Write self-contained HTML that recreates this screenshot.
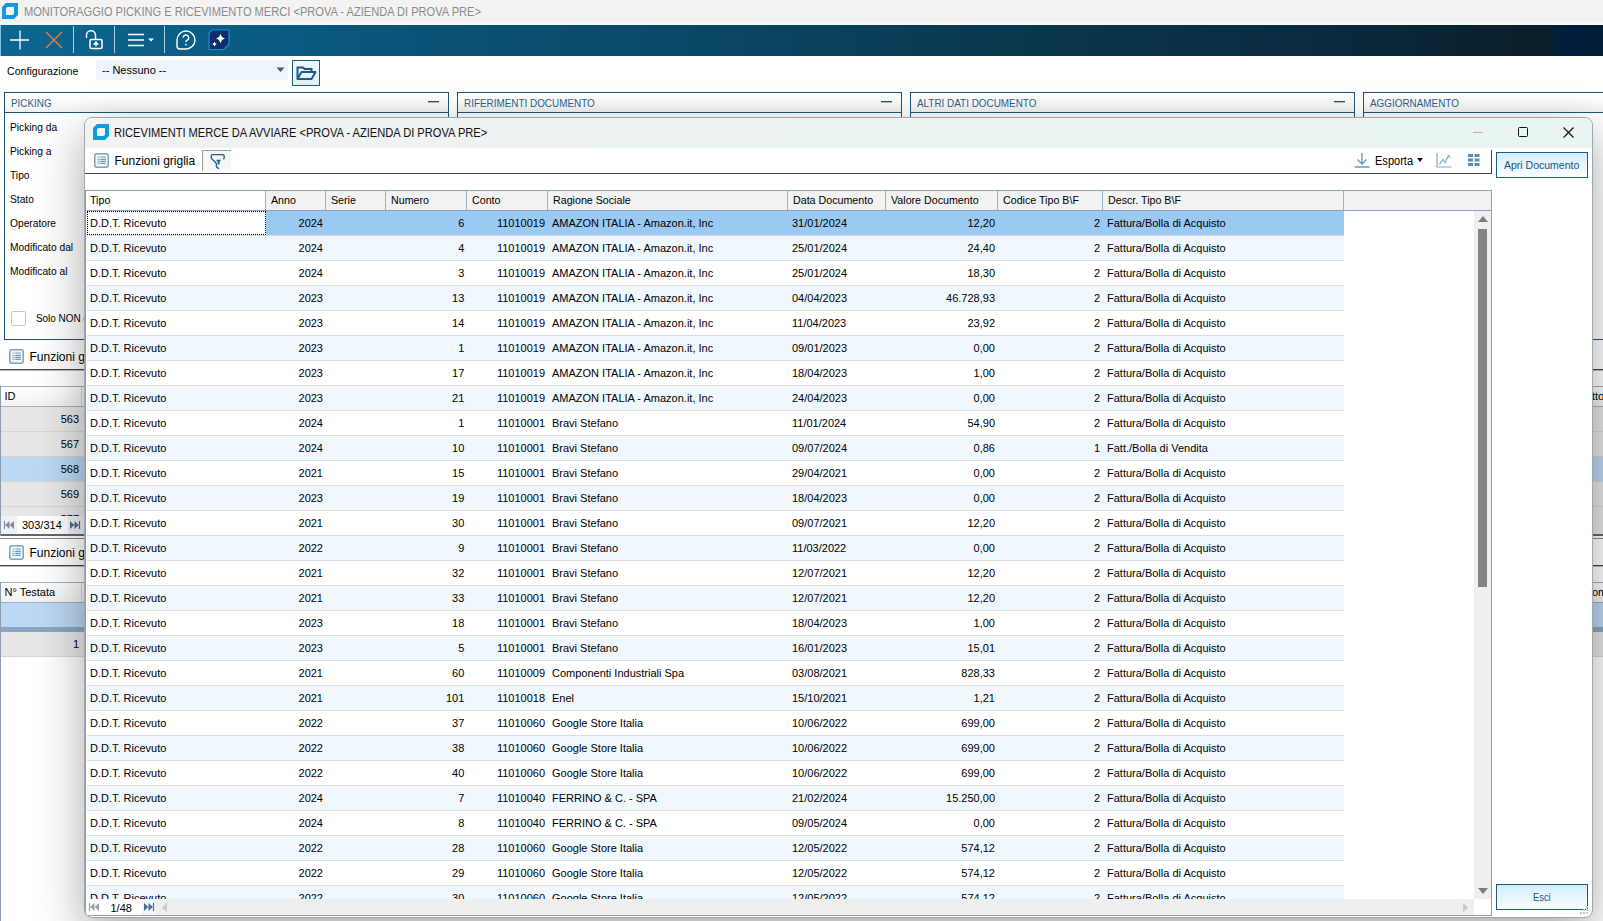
<!DOCTYPE html>
<html><head><meta charset="utf-8">
<style>
*{box-sizing:border-box;margin:0;padding:0}
html,body{width:1603px;height:921px;overflow:hidden;background:#fff;font-family:"Liberation Sans",sans-serif;font-size:11px;color:#000}
.a{position:absolute}
.t{position:absolute;white-space:nowrap;line-height:1}
svg{position:absolute;overflow:visible}
</style></head><body>

<div class="a" style="left:0px;top:0px;width:1603px;height:23px;background:#f3f3f3"></div>
<div class="a" style="left:0px;top:23px;width:1603px;height:2px;background:#f4fbfd"></div>
<svg style="left:2px;top:3px" width="16" height="16" viewBox="0 0 16 16"><path d="M4 0H16V12L12 16H0V4Z" fill="#0d9ce0"/><path d="M5.3 4H12V10.7L10.7 12H4V5.3Z" fill="#f3f3f3"/></svg>
<div class="t " style="left:23.5px;top:5.84px;font-size:12px;color:#8a8a8a;transform:scaleX(0.924);transform-origin:left;">MONITORAGGIO PICKING E RICEVIMENTO MERCI &lt;PROVA - AZIENDA DI PROVA PRE&gt;</div>
<div class="a" style="left:0px;top:25px;width:1603px;height:31px;background:linear-gradient(90deg,#0b6791 0%,#0a5f88 10%,#0a5479 25%,#0a4a6a 40%,#0a3e58 55%,#0a3448 68%,#0a2c42 80%,#0a2434 90%,#0b1e29 96.7%,#021e3c 97.1%,#021c38 100%)"></div>
<div class="a" style="left:0px;top:25px;width:1px;height:31px;background:#7cc4e6"></div>
<div class="a" style="left:73px;top:26px;width:1px;height:27px;background:#d6e8f1;opacity:.8"></div>
<div class="a" style="left:114px;top:26px;width:1px;height:27px;background:#d6e8f1;opacity:.8"></div>
<div class="a" style="left:164px;top:26px;width:1px;height:27px;background:#d6e8f1;opacity:.8"></div>
<svg style="left:10px;top:30px" width="20" height="20" viewBox="0 0 20 20"><path d="M10 0.5V19.5M0 10H19" stroke="#fff" stroke-width="1.3"/></svg>
<svg style="left:45px;top:31px" width="18" height="18" viewBox="0 0 18 18"><path d="M1 1L17 17M17 1L1 17" stroke="#e07a45" stroke-width="1.5"/></svg>
<svg style="left:84px;top:29px" width="22" height="22" viewBox="0 0 22 22"><path d="M2.5 9V6.5A4.5 4.5 0 0 1 11.5 6V10" fill="none" stroke="#fff" stroke-width="1.5"/><rect x="6" y="10.5" width="12" height="9" rx="1.2" fill="none" stroke="#fff" stroke-width="1.5"/><path d="M12 17.5V13.5M10.3 15L12 13L13.7 15Z" stroke="#fff" stroke-width="1.3" fill="#fff"/></svg>
<svg style="left:127px;top:31px" width="30" height="18" viewBox="0 0 30 18"><path d="M1 3.5H17M1 9H17M1 14.5H17" stroke="#fff" stroke-width="1.5"/><path d="M21 7.5H27L24 10.5Z" fill="#fff"/></svg>
<svg style="left:175px;top:29px" width="22" height="22" viewBox="0 0 22 22"><path d="M11 2A9 9 0 1 1 11 20H5A3 3 0 0 1 2 17V11A9 9 0 0 1 11 2Z" fill="none" stroke="#fff" stroke-width="1.4"/><path d="M8.3 8.8A2.7 2.7 0 1 1 11.8 11.3Q11 11.8 11 13" fill="none" stroke="#fff" stroke-width="1.4"/><circle cx="11" cy="15.6" r="0.9" fill="#fff"/></svg>
<svg style="left:208px;top:29px" width="22" height="21" viewBox="0 0 22 21"><path d="M4 1H21V15L15.5 20.5H1V4Z" fill="#0e2d6e" stroke="#1b8fd0" stroke-width="1.2"/><path d="M12.5 4.5Q13.2 8.5 17 9.5Q13.2 10.5 12.5 14.5Q11.8 10.5 8 9.5Q11.8 8.5 12.5 4.5Z" fill="#fff"/><path d="M6.5 12.5Q6.9 14.5 8.8 15Q6.9 15.5 6.5 17.5Q6.1 15.5 4.2 15Q6.1 14.5 6.5 12.5Z" fill="#fff"/></svg>
<div class="t " style="left:6.6px;top:65.69px;font-size:11px;color:#000;transform:scaleX(0.965);transform-origin:left;">Configurazione</div>
<div class="a" style="left:96px;top:60px;width:192px;height:20px;background:#eef6fc"></div>
<div class="t " style="left:102.0px;top:65.19px;font-size:11px;color:#000;">-- Nessuno --</div>
<svg style="left:276px;top:67px" width="10" height="6" viewBox="0 0 10 6"><path d="M0.5 0.5H8.5L4.5 5Z" fill="#505a66"/></svg>
<div class="a" style="left:292px;top:60px;width:28px;height:26px;border:1px solid #1f5d7e;background:linear-gradient(#f0f7fc,#e3eff8)"></div>
<svg style="left:296px;top:65px" width="21" height="16" viewBox="0 0 21 16"><path d="M1.5 13.5V2.5H7L8.5 4H15.5V6.5" fill="none" stroke="#1e5a80" stroke-width="2"/><path d="M1.5 14H15.5L19.5 7H5.5Z" fill="none" stroke="#1e5a80" stroke-width="2" stroke-linejoin="round"/></svg>
<div class="a" style="left:4px;top:92px;width:445px;height:248px;border:1px solid #1f5573;border-right-width:1px;background:#fff"></div>
<div class="a" style="left:5px;top:93px;width:443px;height:19px;background:linear-gradient(#fff 30%,#f1f1f1)"></div>
<div class="a" style="left:4px;top:112px;width:445px;height:1px;background:#1f5573"></div>
<div class="t " style="left:10.5px;top:97.69px;font-size:11px;color:#2c628a;transform:scaleX(0.9);transform-origin:left;">PICKING</div>
<div class="a" style="left:428px;top:101px;width:11px;height:1px;background:#1f5573"></div>
<div class="a" style="left:428px;top:102px;width:11px;height:1px;background:#a9c0ce"></div>
<div class="a" style="left:457px;top:92px;width:445px;height:248px;border:1px solid #1f5573;border-right-width:1px;background:#fff"></div>
<div class="a" style="left:458px;top:93px;width:443px;height:19px;background:linear-gradient(#fff 30%,#f1f1f1)"></div>
<div class="a" style="left:457px;top:112px;width:445px;height:1px;background:#1f5573"></div>
<div class="t " style="left:463.5px;top:97.69px;font-size:11px;color:#2c628a;transform:scaleX(0.9);transform-origin:left;">RIFERIMENTI DOCUMENTO</div>
<div class="a" style="left:881px;top:101px;width:11px;height:1px;background:#1f5573"></div>
<div class="a" style="left:881px;top:102px;width:11px;height:1px;background:#a9c0ce"></div>
<div class="a" style="left:910px;top:92px;width:445px;height:248px;border:1px solid #1f5573;border-right-width:1px;background:#fff"></div>
<div class="a" style="left:911px;top:93px;width:443px;height:19px;background:linear-gradient(#fff 30%,#f1f1f1)"></div>
<div class="a" style="left:910px;top:112px;width:445px;height:1px;background:#1f5573"></div>
<div class="t " style="left:916.5px;top:97.69px;font-size:11px;color:#2c628a;transform:scaleX(0.9);transform-origin:left;">ALTRI DATI DOCUMENTO</div>
<div class="a" style="left:1334px;top:101px;width:11px;height:1px;background:#1f5573"></div>
<div class="a" style="left:1334px;top:102px;width:11px;height:1px;background:#a9c0ce"></div>
<div class="a" style="left:1363px;top:92px;width:260px;height:248px;border:1px solid #1f5573;border-right-width:0px;background:#fff"></div>
<div class="a" style="left:1364px;top:93px;width:258px;height:19px;background:linear-gradient(#fff 30%,#f1f1f1)"></div>
<div class="a" style="left:1363px;top:112px;width:260px;height:1px;background:#1f5573"></div>
<div class="t " style="left:1369.5px;top:97.69px;font-size:11px;color:#2c628a;transform:scaleX(0.9);transform-origin:left;">AGGIORNAMENTO</div>
<div class="t " style="left:10.4px;top:121.69px;font-size:11px;color:#000;transform:scaleX(0.93);transform-origin:left;">Picking da</div>
<div class="t " style="left:10.4px;top:145.69px;font-size:11px;color:#000;transform:scaleX(0.93);transform-origin:left;">Picking a</div>
<div class="t " style="left:10.4px;top:169.69px;font-size:11px;color:#000;transform:scaleX(0.93);transform-origin:left;">Tipo</div>
<div class="t " style="left:10.4px;top:193.69px;font-size:11px;color:#000;transform:scaleX(0.93);transform-origin:left;">Stato</div>
<div class="t " style="left:10.4px;top:217.69px;font-size:11px;color:#000;transform:scaleX(0.93);transform-origin:left;">Operatore</div>
<div class="t " style="left:10.4px;top:241.69px;font-size:11px;color:#000;transform:scaleX(0.93);transform-origin:left;">Modificato dal</div>
<div class="t " style="left:10.4px;top:265.69px;font-size:11px;color:#000;transform:scaleX(0.93);transform-origin:left;">Modificato al</div>
<div class="a" style="left:11px;top:311px;width:15px;height:15px;border:1px solid #c6c6c6;border-radius:2px;background:#fff"></div>
<div class="t " style="left:35.6px;top:312.69px;font-size:11px;color:#000;transform:scaleX(0.9);transform-origin:left;">Solo NON c</div>
<svg style="left:9px;top:349px" width="15" height="15" viewBox="0 0 15 15"><rect x="0.75" y="0.75" width="13.5" height="13.5" rx="2.2" fill="#eef9ff" stroke="#7ea2b8" stroke-width="1.5"/><path d="M3.2 4H5.8M3.2 6.4H5.8M3.2 8.4H5.8M3.2 10.4H5.8" stroke="#a9b9c3" stroke-width="1.2"/><path d="M6.3 4H11.8M6.3 6.4H11.8M6.3 8.4H11.8M6.3 10.4H11.8" stroke="#6f9ab4" stroke-width="1.2"/></svg>
<div class="t " style="left:29.5px;top:350.84px;font-size:12px;color:#000;">Funzioni griglia</div>
<div class="a" style="left:0px;top:369px;width:1603px;height:1px;background:#444"></div>
<div class="a" style="left:0px;top:370px;width:1603px;height:1px;background:#bbb"></div>
<svg style="left:9px;top:545px" width="15" height="15" viewBox="0 0 15 15"><rect x="0.75" y="0.75" width="13.5" height="13.5" rx="2.2" fill="#eef9ff" stroke="#7ea2b8" stroke-width="1.5"/><path d="M3.2 4H5.8M3.2 6.4H5.8M3.2 8.4H5.8M3.2 10.4H5.8" stroke="#a9b9c3" stroke-width="1.2"/><path d="M6.3 4H11.8M6.3 6.4H11.8M6.3 8.4H11.8M6.3 10.4H11.8" stroke="#6f9ab4" stroke-width="1.2"/></svg>
<div class="t " style="left:29.5px;top:546.84px;font-size:12px;color:#000;">Funzioni griglia</div>
<div class="a" style="left:0px;top:565px;width:1603px;height:1px;background:#444"></div>
<div class="a" style="left:0px;top:566px;width:1603px;height:1px;background:#bbb"></div>
<div class="a" style="left:0px;top:386px;width:1603px;height:150px;background:#fff;border-top:1px solid #9fb0c2;border-bottom:2px solid #5d6b78"></div>
<div class="a" style="left:0px;top:387px;width:82px;height:19px;background:linear-gradient(#fff,#f2f2f2);border-right:1px solid #c9d2dc"></div>
<div class="a" style="left:82px;top:387px;width:1521px;height:19px;background:linear-gradient(#fff,#f0f0f0)"></div>
<div class="a" style="left:0px;top:406px;width:1603px;height:1px;background:#9fb0c2"></div>
<div class="t " style="left:4.5px;top:390.69px;font-size:11px;color:#000;">ID</div>
<div class="t " style="left:1592.0px;top:390.69px;font-size:11px;color:#000;">ttom</div>
<div class="a" style="left:0px;top:407px;width:1603px;height:24px;background:#e7e7e7"></div>
<div class="a" style="left:0px;top:431px;width:1603px;height:1px;background:#d6d6d6"></div>
<div class="t " style="right:1524.0px;top:413.69px;font-size:11px;color:#000;">563</div>
<div class="a" style="left:0px;top:432px;width:1603px;height:24px;background:#e7e7e7"></div>
<div class="a" style="left:0px;top:456px;width:1603px;height:1px;background:#d6d6d6"></div>
<div class="t " style="right:1524.0px;top:438.69px;font-size:11px;color:#000;">567</div>
<div class="a" style="left:0px;top:457px;width:1603px;height:24px;background:#bcd8f2"></div>
<div class="a" style="left:0px;top:481px;width:1603px;height:1px;background:#d6d6d6"></div>
<div class="t " style="right:1524.0px;top:463.69px;font-size:11px;color:#000;">568</div>
<div class="a" style="left:0px;top:482px;width:1603px;height:24px;background:#e7e7e7"></div>
<div class="a" style="left:0px;top:506px;width:1603px;height:1px;background:#d6d6d6"></div>
<div class="t " style="right:1524.0px;top:488.69px;font-size:11px;color:#000;">569</div>
<div class="a" style="left:0px;top:507px;width:1603px;height:9px;background:#e7e7e7"></div>
<div class="t " style="right:1524.0px;top:513.69px;font-size:11px;color:#000;">577</div>
<div class="a" style="left:0px;top:516px;width:1603px;height:18px;background:#e7e7e7"></div>
<div class="a" style="left:0px;top:516px;width:84px;height:18px;background:#eef2f6"></div>
<div class="a" style="left:17px;top:516px;width:51px;height:18px;background:#fff"></div>
<div class="t " style="left:22.0px;top:520.19px;font-size:11px;color:#000;">303/314</div>
<svg style="left:4px;top:521px" width="10" height="8" viewBox="0 0 10 8"><path d="M0.5 0V8" stroke="#7d8a9a" stroke-width="1.2"/><path d="M5.5 0V8L1.2 4Z M10 0V8L5.7 4Z" fill="#7d8a9a"/></svg>
<svg style="left:70px;top:521px" width="10" height="8" viewBox="0 0 10 8"><path d="M9.5 0V8" stroke="#4f6a8c" stroke-width="1.2"/><path d="M0 0V8L4.3 4Z M4.5 0V8L8.8 4Z" fill="#4f6a8c"/></svg>
<div class="a" style="left:0px;top:386px;width:1px;height:150px;background:#8e9bab"></div>
<div class="a" style="left:0px;top:538px;width:1603px;height:1px;background:#888"></div>
<div class="a" style="left:0px;top:582px;width:1603px;height:1px;background:#9fb0c2"></div>
<div class="a" style="left:0px;top:583px;width:82px;height:19px;background:linear-gradient(#fff,#f2f2f2);border-right:1px solid #c9d2dc"></div>
<div class="a" style="left:82px;top:583px;width:1521px;height:19px;background:linear-gradient(#fff,#f0f0f0)"></div>
<div class="a" style="left:0px;top:602px;width:1603px;height:1px;background:#9fb0c2"></div>
<div class="t " style="left:4.5px;top:587.19px;font-size:11px;color:#000;transform:scaleX(1.0);transform-origin:left;">N° Testata</div>
<div class="t " style="left:1592.0px;top:587.19px;font-size:11px;color:#000;">om</div>
<div class="a" style="left:0px;top:603px;width:1603px;height:24px;background:#bcd8f2"></div>
<div class="a" style="left:0px;top:627px;width:1603px;height:5px;background:#8aa6c4"></div>
<div class="a" style="left:0px;top:632px;width:1603px;height:24px;background:#e7e7e7"></div>
<div class="a" style="left:0px;top:656px;width:1603px;height:1px;background:#d6d6d6"></div>
<div class="a" style="left:0px;top:582px;width:1px;height:339px;background:#8e9bab"></div>
<div class="t " style="right:1524.0px;top:638.69px;font-size:11px;color:#000;">1</div>
<div class="a" style="left:84px;top:117px;width:1509px;height:801px;border:1px solid #9ea6ae;border-radius:8px;background:#fff;box-shadow:0 16px 48px rgba(0,0,0,.34);overflow:hidden">
<div class="a" style="left:0px;top:0px;width:1507px;height:30px;background:linear-gradient(90deg,#f1f2f2,#ebf3f1 50%,#e8f5f2)"></div>
<svg style="left:8px;top:6px" width="16" height="16" viewBox="0 0 16 16"><path d="M4 0H16V12L12 16H0V4Z" fill="#0d9ce0"/><path d="M5.3 4H12V10.7L10.7 12H4V5.3Z" fill="#f1f2f2"/></svg>
<div class="t" style="left:29.0px;top:8.84px;font-size:12px;color:#111;transform:scaleX(0.925);transform-origin:left;">RICEVIMENTI MERCE DA AVVIARE &lt;PROVA - AZIENDA DI PROVA PRE&gt;</div>
<div class="a" style="left:1388px;top:14px;width:10px;height:1px;background:#b4b4b4"></div>
<div class="a" style="left:1433px;top:9px;width:10px;height:10px;border:1.4px solid #111;border-radius:1.5px"></div>
<svg style="left:1478px;top:9px" width="11" height="11" viewBox="0 0 11 11"><path d="M0.5 0.5L10.5 10.5M10.5 0.5L0.5 10.5" stroke="#111" stroke-width="1.2"/></svg>
<div class="a" style="left:1406px;top:32px;width:1px;height:24px;background:#444"></div>
<div class="a" style="left:0px;top:55px;width:1407px;height:1px;background:#444"></div>
<svg style="left:9px;top:35px" width="15" height="15" viewBox="0 0 15 15"><rect x="0.75" y="0.75" width="13.5" height="13.5" rx="2.2" fill="#eef9ff" stroke="#7ea2b8" stroke-width="1.5"/><path d="M3.2 4H5.8M3.2 6.4H5.8M3.2 8.4H5.8M3.2 10.4H5.8" stroke="#a9b9c3" stroke-width="1.2"/><path d="M6.3 4H11.8M6.3 6.4H11.8M6.3 8.4H11.8M6.3 10.4H11.8" stroke="#6f9ab4" stroke-width="1.2"/></svg>
<div class="t" style="left:29.5px;top:36.84px;font-size:12px;color:#000;">Funzioni griglia</div>
<div class="a" style="left:117px;top:32px;width:29px;height:21px;border-left:1px solid #a0a0a0;border-top:1px solid #a0a0a0;background:#f6f7f8"></div>
<svg style="left:123px;top:34px" width="20" height="20" viewBox="0 0 20 20"><path d="M15.8 6.8Q16.2 6.2 16.2 5.2V4.2Q16.2 2.6 14.6 2.6H4.6Q3.2 2.6 3.2 4.2V5.2Q3.2 6.3 4.2 7.2L7.6 10.6Q8.4 11.4 8.4 12.6V14Q8.4 15 9.3 15.6L10.6 16.4" fill="none" stroke="#1f6088" stroke-width="1.4" stroke-linecap="round"/><path d="M8.6 8.6H12.6" stroke="#1f6088" stroke-width="1.5"/><path d="M10.6 8.6V12.6" stroke="#1f6088" stroke-width="1.9"/></svg>
<svg style="left:1269px;top:34px" width="16" height="16" viewBox="0 0 16 16"><path d="M8 1V12M3.5 7.5L8 12L12.5 7.5" fill="none" stroke="#5b9bc0" stroke-width="1.3"/><path d="M0.5 15H15.5" stroke="#5b9bc0" stroke-width="1.4"/></svg>
<div class="t" style="left:1290.3px;top:36.84px;font-size:12px;color:#000;transform:scaleX(0.92);transform-origin:left;">Esporta</div>
<svg style="left:1332px;top:40px" width="6" height="4" viewBox="0 0 6 4"><path d="M0 0H6L3 4Z" fill="#111"/></svg>
<svg style="left:1351px;top:34px" width="16" height="16" viewBox="0 0 16 16"><path d="M1 1V15H15.5" fill="none" stroke="#7fb0cc" stroke-width="1.2"/><path d="M3.5 12.5L7 7.5L9 10.5L12.5 3.5L14 6" fill="none" stroke="#7fb0cc" stroke-width="1.3"/></svg>
<svg style="left:1383px;top:36px" width="13" height="13" viewBox="0 0 13 13"><path d="M0 0H5V3H0ZM6.5 0H11.5V3H6.5Z M0 4.5H5V7.5H0ZM6.5 4.5H11.5V7.5H6.5Z M0 9H5V12H0ZM6.5 9H11.5V12H6.5Z" fill="#5a90b2"/></svg>
<div class="a" style="left:1411px;top:34px;width:92px;height:26px;border:1.5px solid #1f5d7e;background:linear-gradient(#d3edfd,#f3fbff 80%,#fff)"></div>
<div class="t" style="left:1419.0px;top:41.69px;font-size:11px;color:#1f5478;transform:scaleX(0.955);transform-origin:left;">Apri Documento</div>
<div class="a" style="left:1411px;top:766px;width:92px;height:26px;border:1.5px solid #1f5d7e;background:linear-gradient(#d3edfd,#f3fbff 80%,#fff)"></div>
<div class="t" style="left:1447.6px;top:773.69px;font-size:11px;color:#1f5478;transform:scaleX(0.85);transform-origin:left;">Esci</div>
<svg style="left:1493px;top:787px" width="11" height="11" viewBox="0 0 11 11"><path d="M8 1h2v2h-2zM5 4h2v2h-2zM8 4h2v2h-2zM2 7h2v2h-2zM5 7h2v2h-2zM8 7h2v2h-2z" fill="#c8c8c8"/></svg>
<div class="a" style="left:0px;top:72px;width:1407px;height:1px;background:#8fa3b8"></div>
<div class="a" style="left:0px;top:72px;width:1px;height:726px;background:#8e9bab"></div>
<div class="a" style="left:1406px;top:72px;width:1px;height:726px;background:#8fa3b8"></div>
<div class="a" style="left:2px;top:73px;width:1404px;height:19px;background:#f2f2f2"></div>
<div class="a" style="left:2px;top:73px;width:179px;height:19px;background:#fff"></div>
<div class="t" style="left:5.0px;top:76.69px;font-size:11px;color:#000;transform:scaleX(0.97);transform-origin:left;">Tipo</div>
<div class="a" style="left:180px;top:73px;width:1px;height:19px;background:#9fb0c2"></div>
<div class="t" style="left:186.4px;top:76.69px;font-size:11px;color:#000;transform:scaleX(0.97);transform-origin:left;">Anno</div>
<div class="a" style="left:240px;top:73px;width:1px;height:19px;background:#9fb0c2"></div>
<div class="t" style="left:246.4px;top:76.69px;font-size:11px;color:#000;transform:scaleX(0.97);transform-origin:left;">Serie</div>
<div class="a" style="left:300px;top:73px;width:1px;height:19px;background:#9fb0c2"></div>
<div class="t" style="left:306.4px;top:76.69px;font-size:11px;color:#000;transform:scaleX(0.97);transform-origin:left;">Numero</div>
<div class="a" style="left:381px;top:73px;width:1px;height:19px;background:#9fb0c2"></div>
<div class="t" style="left:387.4px;top:76.69px;font-size:11px;color:#000;transform:scaleX(0.97);transform-origin:left;">Conto</div>
<div class="a" style="left:462px;top:73px;width:1px;height:19px;background:#9fb0c2"></div>
<div class="t" style="left:468.4px;top:76.69px;font-size:11px;color:#000;transform:scaleX(0.97);transform-origin:left;">Ragione Sociale</div>
<div class="a" style="left:702px;top:73px;width:1px;height:19px;background:#9fb0c2"></div>
<div class="t" style="left:708.4px;top:76.69px;font-size:11px;color:#000;transform:scaleX(0.97);transform-origin:left;">Data Documento</div>
<div class="a" style="left:800px;top:73px;width:1px;height:19px;background:#9fb0c2"></div>
<div class="t" style="left:806.4px;top:76.69px;font-size:11px;color:#000;transform:scaleX(0.97);transform-origin:left;">Valore Documento</div>
<div class="a" style="left:912px;top:73px;width:1px;height:19px;background:#9fb0c2"></div>
<div class="t" style="left:918.4px;top:76.69px;font-size:11px;color:#000;transform:scaleX(0.97);transform-origin:left;">Codice Tipo B\F</div>
<div class="a" style="left:1017px;top:73px;width:1px;height:19px;background:#9fb0c2"></div>
<div class="t" style="left:1023.4px;top:76.69px;font-size:11px;color:#000;transform:scaleX(0.97);transform-origin:left;">Descr. Tipo B\F</div>
<div class="a" style="left:1258px;top:73px;width:1px;height:19px;background:#9fb0c2"></div>
<div class="a" style="left:2px;top:92px;width:1404px;height:1px;background:#8fa3b8"></div>
<div class="a" style="left:2px;top:93px;width:1387px;height:688px;overflow:hidden">
<div class="a" style="left:179px;top:0px;width:1078px;height:24px;background:#9ac9f2"></div>
<div class="a" style="left:0px;top:0px;width:179px;height:24px;background:#fff"></div>
<div class="a" style="left:0px;top:24px;width:1257px;height:1px;background:#dcdcdc"></div>
<div class="t" style="left:3.0px;top:6.69px;font-size:11px">D.D.T. Ricevuto</div>
<div class="t" style="right:1151.0px;top:6.69px;font-size:11px">2024</div>
<div class="t" style="right:1009.7px;top:6.69px;font-size:11px">6</div>
<div class="t" style="right:929.0px;top:6.69px;font-size:11px">11010019</div>
<div class="t" style="left:465.0px;top:6.69px;font-size:11px">AMAZON ITALIA - Amazon.it, Inc</div>
<div class="t" style="left:705.0px;top:6.69px;font-size:11px">31/01/2024</div>
<div class="t" style="right:479.0px;top:6.69px;font-size:11px">12,20</div>
<div class="t" style="right:374.0px;top:6.69px;font-size:11px">2</div>
<div class="t" style="left:1020.0px;top:6.69px;font-size:11px">Fattura/Bolla di Acquisto</div>
<div class="a" style="left:0px;top:25px;width:1257px;height:24px;background:#f0f8fe"></div>
<div class="a" style="left:0px;top:49px;width:1257px;height:1px;background:#dcdcdc"></div>
<div class="t" style="left:3.0px;top:31.69px;font-size:11px">D.D.T. Ricevuto</div>
<div class="t" style="right:1151.0px;top:31.69px;font-size:11px">2024</div>
<div class="t" style="right:1009.7px;top:31.69px;font-size:11px">4</div>
<div class="t" style="right:929.0px;top:31.69px;font-size:11px">11010019</div>
<div class="t" style="left:465.0px;top:31.69px;font-size:11px">AMAZON ITALIA - Amazon.it, Inc</div>
<div class="t" style="left:705.0px;top:31.69px;font-size:11px">25/01/2024</div>
<div class="t" style="right:479.0px;top:31.69px;font-size:11px">24,40</div>
<div class="t" style="right:374.0px;top:31.69px;font-size:11px">2</div>
<div class="t" style="left:1020.0px;top:31.69px;font-size:11px">Fattura/Bolla di Acquisto</div>
<div class="a" style="left:0px;top:74px;width:1257px;height:1px;background:#dcdcdc"></div>
<div class="t" style="left:3.0px;top:56.69px;font-size:11px">D.D.T. Ricevuto</div>
<div class="t" style="right:1151.0px;top:56.69px;font-size:11px">2024</div>
<div class="t" style="right:1009.7px;top:56.69px;font-size:11px">3</div>
<div class="t" style="right:929.0px;top:56.69px;font-size:11px">11010019</div>
<div class="t" style="left:465.0px;top:56.69px;font-size:11px">AMAZON ITALIA - Amazon.it, Inc</div>
<div class="t" style="left:705.0px;top:56.69px;font-size:11px">25/01/2024</div>
<div class="t" style="right:479.0px;top:56.69px;font-size:11px">18,30</div>
<div class="t" style="right:374.0px;top:56.69px;font-size:11px">2</div>
<div class="t" style="left:1020.0px;top:56.69px;font-size:11px">Fattura/Bolla di Acquisto</div>
<div class="a" style="left:0px;top:75px;width:1257px;height:24px;background:#f0f8fe"></div>
<div class="a" style="left:0px;top:99px;width:1257px;height:1px;background:#dcdcdc"></div>
<div class="t" style="left:3.0px;top:81.69px;font-size:11px">D.D.T. Ricevuto</div>
<div class="t" style="right:1151.0px;top:81.69px;font-size:11px">2023</div>
<div class="t" style="right:1009.7px;top:81.69px;font-size:11px">13</div>
<div class="t" style="right:929.0px;top:81.69px;font-size:11px">11010019</div>
<div class="t" style="left:465.0px;top:81.69px;font-size:11px">AMAZON ITALIA - Amazon.it, Inc</div>
<div class="t" style="left:705.0px;top:81.69px;font-size:11px">04/04/2023</div>
<div class="t" style="right:479.0px;top:81.69px;font-size:11px">46.728,93</div>
<div class="t" style="right:374.0px;top:81.69px;font-size:11px">2</div>
<div class="t" style="left:1020.0px;top:81.69px;font-size:11px">Fattura/Bolla di Acquisto</div>
<div class="a" style="left:0px;top:124px;width:1257px;height:1px;background:#dcdcdc"></div>
<div class="t" style="left:3.0px;top:106.69px;font-size:11px">D.D.T. Ricevuto</div>
<div class="t" style="right:1151.0px;top:106.69px;font-size:11px">2023</div>
<div class="t" style="right:1009.7px;top:106.69px;font-size:11px">14</div>
<div class="t" style="right:929.0px;top:106.69px;font-size:11px">11010019</div>
<div class="t" style="left:465.0px;top:106.69px;font-size:11px">AMAZON ITALIA - Amazon.it, Inc</div>
<div class="t" style="left:705.0px;top:106.69px;font-size:11px">11/04/2023</div>
<div class="t" style="right:479.0px;top:106.69px;font-size:11px">23,92</div>
<div class="t" style="right:374.0px;top:106.69px;font-size:11px">2</div>
<div class="t" style="left:1020.0px;top:106.69px;font-size:11px">Fattura/Bolla di Acquisto</div>
<div class="a" style="left:0px;top:125px;width:1257px;height:24px;background:#f0f8fe"></div>
<div class="a" style="left:0px;top:149px;width:1257px;height:1px;background:#dcdcdc"></div>
<div class="t" style="left:3.0px;top:131.69px;font-size:11px">D.D.T. Ricevuto</div>
<div class="t" style="right:1151.0px;top:131.69px;font-size:11px">2023</div>
<div class="t" style="right:1009.7px;top:131.69px;font-size:11px">1</div>
<div class="t" style="right:929.0px;top:131.69px;font-size:11px">11010019</div>
<div class="t" style="left:465.0px;top:131.69px;font-size:11px">AMAZON ITALIA - Amazon.it, Inc</div>
<div class="t" style="left:705.0px;top:131.69px;font-size:11px">09/01/2023</div>
<div class="t" style="right:479.0px;top:131.69px;font-size:11px">0,00</div>
<div class="t" style="right:374.0px;top:131.69px;font-size:11px">2</div>
<div class="t" style="left:1020.0px;top:131.69px;font-size:11px">Fattura/Bolla di Acquisto</div>
<div class="a" style="left:0px;top:174px;width:1257px;height:1px;background:#dcdcdc"></div>
<div class="t" style="left:3.0px;top:156.69px;font-size:11px">D.D.T. Ricevuto</div>
<div class="t" style="right:1151.0px;top:156.69px;font-size:11px">2023</div>
<div class="t" style="right:1009.7px;top:156.69px;font-size:11px">17</div>
<div class="t" style="right:929.0px;top:156.69px;font-size:11px">11010019</div>
<div class="t" style="left:465.0px;top:156.69px;font-size:11px">AMAZON ITALIA - Amazon.it, Inc</div>
<div class="t" style="left:705.0px;top:156.69px;font-size:11px">18/04/2023</div>
<div class="t" style="right:479.0px;top:156.69px;font-size:11px">1,00</div>
<div class="t" style="right:374.0px;top:156.69px;font-size:11px">2</div>
<div class="t" style="left:1020.0px;top:156.69px;font-size:11px">Fattura/Bolla di Acquisto</div>
<div class="a" style="left:0px;top:175px;width:1257px;height:24px;background:#f0f8fe"></div>
<div class="a" style="left:0px;top:199px;width:1257px;height:1px;background:#dcdcdc"></div>
<div class="t" style="left:3.0px;top:181.69px;font-size:11px">D.D.T. Ricevuto</div>
<div class="t" style="right:1151.0px;top:181.69px;font-size:11px">2023</div>
<div class="t" style="right:1009.7px;top:181.69px;font-size:11px">21</div>
<div class="t" style="right:929.0px;top:181.69px;font-size:11px">11010019</div>
<div class="t" style="left:465.0px;top:181.69px;font-size:11px">AMAZON ITALIA - Amazon.it, Inc</div>
<div class="t" style="left:705.0px;top:181.69px;font-size:11px">24/04/2023</div>
<div class="t" style="right:479.0px;top:181.69px;font-size:11px">0,00</div>
<div class="t" style="right:374.0px;top:181.69px;font-size:11px">2</div>
<div class="t" style="left:1020.0px;top:181.69px;font-size:11px">Fattura/Bolla di Acquisto</div>
<div class="a" style="left:0px;top:224px;width:1257px;height:1px;background:#dcdcdc"></div>
<div class="t" style="left:3.0px;top:206.69px;font-size:11px">D.D.T. Ricevuto</div>
<div class="t" style="right:1151.0px;top:206.69px;font-size:11px">2024</div>
<div class="t" style="right:1009.7px;top:206.69px;font-size:11px">1</div>
<div class="t" style="right:929.0px;top:206.69px;font-size:11px">11010001</div>
<div class="t" style="left:465.0px;top:206.69px;font-size:11px">Bravi Stefano</div>
<div class="t" style="left:705.0px;top:206.69px;font-size:11px">11/01/2024</div>
<div class="t" style="right:479.0px;top:206.69px;font-size:11px">54,90</div>
<div class="t" style="right:374.0px;top:206.69px;font-size:11px">2</div>
<div class="t" style="left:1020.0px;top:206.69px;font-size:11px">Fattura/Bolla di Acquisto</div>
<div class="a" style="left:0px;top:225px;width:1257px;height:24px;background:#f0f8fe"></div>
<div class="a" style="left:0px;top:249px;width:1257px;height:1px;background:#dcdcdc"></div>
<div class="t" style="left:3.0px;top:231.69px;font-size:11px">D.D.T. Ricevuto</div>
<div class="t" style="right:1151.0px;top:231.69px;font-size:11px">2024</div>
<div class="t" style="right:1009.7px;top:231.69px;font-size:11px">10</div>
<div class="t" style="right:929.0px;top:231.69px;font-size:11px">11010001</div>
<div class="t" style="left:465.0px;top:231.69px;font-size:11px">Bravi Stefano</div>
<div class="t" style="left:705.0px;top:231.69px;font-size:11px">09/07/2024</div>
<div class="t" style="right:479.0px;top:231.69px;font-size:11px">0,86</div>
<div class="t" style="right:374.0px;top:231.69px;font-size:11px">1</div>
<div class="t" style="left:1020.0px;top:231.69px;font-size:11px">Fatt./Bolla di Vendita</div>
<div class="a" style="left:0px;top:274px;width:1257px;height:1px;background:#dcdcdc"></div>
<div class="t" style="left:3.0px;top:256.69px;font-size:11px">D.D.T. Ricevuto</div>
<div class="t" style="right:1151.0px;top:256.69px;font-size:11px">2021</div>
<div class="t" style="right:1009.7px;top:256.69px;font-size:11px">15</div>
<div class="t" style="right:929.0px;top:256.69px;font-size:11px">11010001</div>
<div class="t" style="left:465.0px;top:256.69px;font-size:11px">Bravi Stefano</div>
<div class="t" style="left:705.0px;top:256.69px;font-size:11px">29/04/2021</div>
<div class="t" style="right:479.0px;top:256.69px;font-size:11px">0,00</div>
<div class="t" style="right:374.0px;top:256.69px;font-size:11px">2</div>
<div class="t" style="left:1020.0px;top:256.69px;font-size:11px">Fattura/Bolla di Acquisto</div>
<div class="a" style="left:0px;top:275px;width:1257px;height:24px;background:#f0f8fe"></div>
<div class="a" style="left:0px;top:299px;width:1257px;height:1px;background:#dcdcdc"></div>
<div class="t" style="left:3.0px;top:281.69px;font-size:11px">D.D.T. Ricevuto</div>
<div class="t" style="right:1151.0px;top:281.69px;font-size:11px">2023</div>
<div class="t" style="right:1009.7px;top:281.69px;font-size:11px">19</div>
<div class="t" style="right:929.0px;top:281.69px;font-size:11px">11010001</div>
<div class="t" style="left:465.0px;top:281.69px;font-size:11px">Bravi Stefano</div>
<div class="t" style="left:705.0px;top:281.69px;font-size:11px">18/04/2023</div>
<div class="t" style="right:479.0px;top:281.69px;font-size:11px">0,00</div>
<div class="t" style="right:374.0px;top:281.69px;font-size:11px">2</div>
<div class="t" style="left:1020.0px;top:281.69px;font-size:11px">Fattura/Bolla di Acquisto</div>
<div class="a" style="left:0px;top:324px;width:1257px;height:1px;background:#dcdcdc"></div>
<div class="t" style="left:3.0px;top:306.69px;font-size:11px">D.D.T. Ricevuto</div>
<div class="t" style="right:1151.0px;top:306.69px;font-size:11px">2021</div>
<div class="t" style="right:1009.7px;top:306.69px;font-size:11px">30</div>
<div class="t" style="right:929.0px;top:306.69px;font-size:11px">11010001</div>
<div class="t" style="left:465.0px;top:306.69px;font-size:11px">Bravi Stefano</div>
<div class="t" style="left:705.0px;top:306.69px;font-size:11px">09/07/2021</div>
<div class="t" style="right:479.0px;top:306.69px;font-size:11px">12,20</div>
<div class="t" style="right:374.0px;top:306.69px;font-size:11px">2</div>
<div class="t" style="left:1020.0px;top:306.69px;font-size:11px">Fattura/Bolla di Acquisto</div>
<div class="a" style="left:0px;top:325px;width:1257px;height:24px;background:#f0f8fe"></div>
<div class="a" style="left:0px;top:349px;width:1257px;height:1px;background:#dcdcdc"></div>
<div class="t" style="left:3.0px;top:331.69px;font-size:11px">D.D.T. Ricevuto</div>
<div class="t" style="right:1151.0px;top:331.69px;font-size:11px">2022</div>
<div class="t" style="right:1009.7px;top:331.69px;font-size:11px">9</div>
<div class="t" style="right:929.0px;top:331.69px;font-size:11px">11010001</div>
<div class="t" style="left:465.0px;top:331.69px;font-size:11px">Bravi Stefano</div>
<div class="t" style="left:705.0px;top:331.69px;font-size:11px">11/03/2022</div>
<div class="t" style="right:479.0px;top:331.69px;font-size:11px">0,00</div>
<div class="t" style="right:374.0px;top:331.69px;font-size:11px">2</div>
<div class="t" style="left:1020.0px;top:331.69px;font-size:11px">Fattura/Bolla di Acquisto</div>
<div class="a" style="left:0px;top:374px;width:1257px;height:1px;background:#dcdcdc"></div>
<div class="t" style="left:3.0px;top:356.69px;font-size:11px">D.D.T. Ricevuto</div>
<div class="t" style="right:1151.0px;top:356.69px;font-size:11px">2021</div>
<div class="t" style="right:1009.7px;top:356.69px;font-size:11px">32</div>
<div class="t" style="right:929.0px;top:356.69px;font-size:11px">11010001</div>
<div class="t" style="left:465.0px;top:356.69px;font-size:11px">Bravi Stefano</div>
<div class="t" style="left:705.0px;top:356.69px;font-size:11px">12/07/2021</div>
<div class="t" style="right:479.0px;top:356.69px;font-size:11px">12,20</div>
<div class="t" style="right:374.0px;top:356.69px;font-size:11px">2</div>
<div class="t" style="left:1020.0px;top:356.69px;font-size:11px">Fattura/Bolla di Acquisto</div>
<div class="a" style="left:0px;top:375px;width:1257px;height:24px;background:#f0f8fe"></div>
<div class="a" style="left:0px;top:399px;width:1257px;height:1px;background:#dcdcdc"></div>
<div class="t" style="left:3.0px;top:381.69px;font-size:11px">D.D.T. Ricevuto</div>
<div class="t" style="right:1151.0px;top:381.69px;font-size:11px">2021</div>
<div class="t" style="right:1009.7px;top:381.69px;font-size:11px">33</div>
<div class="t" style="right:929.0px;top:381.69px;font-size:11px">11010001</div>
<div class="t" style="left:465.0px;top:381.69px;font-size:11px">Bravi Stefano</div>
<div class="t" style="left:705.0px;top:381.69px;font-size:11px">12/07/2021</div>
<div class="t" style="right:479.0px;top:381.69px;font-size:11px">12,20</div>
<div class="t" style="right:374.0px;top:381.69px;font-size:11px">2</div>
<div class="t" style="left:1020.0px;top:381.69px;font-size:11px">Fattura/Bolla di Acquisto</div>
<div class="a" style="left:0px;top:424px;width:1257px;height:1px;background:#dcdcdc"></div>
<div class="t" style="left:3.0px;top:406.69px;font-size:11px">D.D.T. Ricevuto</div>
<div class="t" style="right:1151.0px;top:406.69px;font-size:11px">2023</div>
<div class="t" style="right:1009.7px;top:406.69px;font-size:11px">18</div>
<div class="t" style="right:929.0px;top:406.69px;font-size:11px">11010001</div>
<div class="t" style="left:465.0px;top:406.69px;font-size:11px">Bravi Stefano</div>
<div class="t" style="left:705.0px;top:406.69px;font-size:11px">18/04/2023</div>
<div class="t" style="right:479.0px;top:406.69px;font-size:11px">1,00</div>
<div class="t" style="right:374.0px;top:406.69px;font-size:11px">2</div>
<div class="t" style="left:1020.0px;top:406.69px;font-size:11px">Fattura/Bolla di Acquisto</div>
<div class="a" style="left:0px;top:425px;width:1257px;height:24px;background:#f0f8fe"></div>
<div class="a" style="left:0px;top:449px;width:1257px;height:1px;background:#dcdcdc"></div>
<div class="t" style="left:3.0px;top:431.69px;font-size:11px">D.D.T. Ricevuto</div>
<div class="t" style="right:1151.0px;top:431.69px;font-size:11px">2023</div>
<div class="t" style="right:1009.7px;top:431.69px;font-size:11px">5</div>
<div class="t" style="right:929.0px;top:431.69px;font-size:11px">11010001</div>
<div class="t" style="left:465.0px;top:431.69px;font-size:11px">Bravi Stefano</div>
<div class="t" style="left:705.0px;top:431.69px;font-size:11px">16/01/2023</div>
<div class="t" style="right:479.0px;top:431.69px;font-size:11px">15,01</div>
<div class="t" style="right:374.0px;top:431.69px;font-size:11px">2</div>
<div class="t" style="left:1020.0px;top:431.69px;font-size:11px">Fattura/Bolla di Acquisto</div>
<div class="a" style="left:0px;top:474px;width:1257px;height:1px;background:#dcdcdc"></div>
<div class="t" style="left:3.0px;top:456.69px;font-size:11px">D.D.T. Ricevuto</div>
<div class="t" style="right:1151.0px;top:456.69px;font-size:11px">2021</div>
<div class="t" style="right:1009.7px;top:456.69px;font-size:11px">60</div>
<div class="t" style="right:929.0px;top:456.69px;font-size:11px">11010009</div>
<div class="t" style="left:465.0px;top:456.69px;font-size:11px">Componenti Industriali Spa</div>
<div class="t" style="left:705.0px;top:456.69px;font-size:11px">03/08/2021</div>
<div class="t" style="right:479.0px;top:456.69px;font-size:11px">828,33</div>
<div class="t" style="right:374.0px;top:456.69px;font-size:11px">2</div>
<div class="t" style="left:1020.0px;top:456.69px;font-size:11px">Fattura/Bolla di Acquisto</div>
<div class="a" style="left:0px;top:475px;width:1257px;height:24px;background:#f0f8fe"></div>
<div class="a" style="left:0px;top:499px;width:1257px;height:1px;background:#dcdcdc"></div>
<div class="t" style="left:3.0px;top:481.69px;font-size:11px">D.D.T. Ricevuto</div>
<div class="t" style="right:1151.0px;top:481.69px;font-size:11px">2021</div>
<div class="t" style="right:1009.7px;top:481.69px;font-size:11px">101</div>
<div class="t" style="right:929.0px;top:481.69px;font-size:11px">11010018</div>
<div class="t" style="left:465.0px;top:481.69px;font-size:11px">Enel</div>
<div class="t" style="left:705.0px;top:481.69px;font-size:11px">15/10/2021</div>
<div class="t" style="right:479.0px;top:481.69px;font-size:11px">1,21</div>
<div class="t" style="right:374.0px;top:481.69px;font-size:11px">2</div>
<div class="t" style="left:1020.0px;top:481.69px;font-size:11px">Fattura/Bolla di Acquisto</div>
<div class="a" style="left:0px;top:524px;width:1257px;height:1px;background:#dcdcdc"></div>
<div class="t" style="left:3.0px;top:506.69px;font-size:11px">D.D.T. Ricevuto</div>
<div class="t" style="right:1151.0px;top:506.69px;font-size:11px">2022</div>
<div class="t" style="right:1009.7px;top:506.69px;font-size:11px">37</div>
<div class="t" style="right:929.0px;top:506.69px;font-size:11px">11010060</div>
<div class="t" style="left:465.0px;top:506.69px;font-size:11px">Google Store Italia</div>
<div class="t" style="left:705.0px;top:506.69px;font-size:11px">10/06/2022</div>
<div class="t" style="right:479.0px;top:506.69px;font-size:11px">699,00</div>
<div class="t" style="right:374.0px;top:506.69px;font-size:11px">2</div>
<div class="t" style="left:1020.0px;top:506.69px;font-size:11px">Fattura/Bolla di Acquisto</div>
<div class="a" style="left:0px;top:525px;width:1257px;height:24px;background:#f0f8fe"></div>
<div class="a" style="left:0px;top:549px;width:1257px;height:1px;background:#dcdcdc"></div>
<div class="t" style="left:3.0px;top:531.69px;font-size:11px">D.D.T. Ricevuto</div>
<div class="t" style="right:1151.0px;top:531.69px;font-size:11px">2022</div>
<div class="t" style="right:1009.7px;top:531.69px;font-size:11px">38</div>
<div class="t" style="right:929.0px;top:531.69px;font-size:11px">11010060</div>
<div class="t" style="left:465.0px;top:531.69px;font-size:11px">Google Store Italia</div>
<div class="t" style="left:705.0px;top:531.69px;font-size:11px">10/06/2022</div>
<div class="t" style="right:479.0px;top:531.69px;font-size:11px">699,00</div>
<div class="t" style="right:374.0px;top:531.69px;font-size:11px">2</div>
<div class="t" style="left:1020.0px;top:531.69px;font-size:11px">Fattura/Bolla di Acquisto</div>
<div class="a" style="left:0px;top:574px;width:1257px;height:1px;background:#dcdcdc"></div>
<div class="t" style="left:3.0px;top:556.69px;font-size:11px">D.D.T. Ricevuto</div>
<div class="t" style="right:1151.0px;top:556.69px;font-size:11px">2022</div>
<div class="t" style="right:1009.7px;top:556.69px;font-size:11px">40</div>
<div class="t" style="right:929.0px;top:556.69px;font-size:11px">11010060</div>
<div class="t" style="left:465.0px;top:556.69px;font-size:11px">Google Store Italia</div>
<div class="t" style="left:705.0px;top:556.69px;font-size:11px">10/06/2022</div>
<div class="t" style="right:479.0px;top:556.69px;font-size:11px">699,00</div>
<div class="t" style="right:374.0px;top:556.69px;font-size:11px">2</div>
<div class="t" style="left:1020.0px;top:556.69px;font-size:11px">Fattura/Bolla di Acquisto</div>
<div class="a" style="left:0px;top:575px;width:1257px;height:24px;background:#f0f8fe"></div>
<div class="a" style="left:0px;top:599px;width:1257px;height:1px;background:#dcdcdc"></div>
<div class="t" style="left:3.0px;top:581.69px;font-size:11px">D.D.T. Ricevuto</div>
<div class="t" style="right:1151.0px;top:581.69px;font-size:11px">2024</div>
<div class="t" style="right:1009.7px;top:581.69px;font-size:11px">7</div>
<div class="t" style="right:929.0px;top:581.69px;font-size:11px">11010040</div>
<div class="t" style="left:465.0px;top:581.69px;font-size:11px">FERRINO &amp; C. - SPA</div>
<div class="t" style="left:705.0px;top:581.69px;font-size:11px">21/02/2024</div>
<div class="t" style="right:479.0px;top:581.69px;font-size:11px">15.250,00</div>
<div class="t" style="right:374.0px;top:581.69px;font-size:11px">2</div>
<div class="t" style="left:1020.0px;top:581.69px;font-size:11px">Fattura/Bolla di Acquisto</div>
<div class="a" style="left:0px;top:624px;width:1257px;height:1px;background:#dcdcdc"></div>
<div class="t" style="left:3.0px;top:606.69px;font-size:11px">D.D.T. Ricevuto</div>
<div class="t" style="right:1151.0px;top:606.69px;font-size:11px">2024</div>
<div class="t" style="right:1009.7px;top:606.69px;font-size:11px">8</div>
<div class="t" style="right:929.0px;top:606.69px;font-size:11px">11010040</div>
<div class="t" style="left:465.0px;top:606.69px;font-size:11px">FERRINO &amp; C. - SPA</div>
<div class="t" style="left:705.0px;top:606.69px;font-size:11px">09/05/2024</div>
<div class="t" style="right:479.0px;top:606.69px;font-size:11px">0,00</div>
<div class="t" style="right:374.0px;top:606.69px;font-size:11px">2</div>
<div class="t" style="left:1020.0px;top:606.69px;font-size:11px">Fattura/Bolla di Acquisto</div>
<div class="a" style="left:0px;top:625px;width:1257px;height:24px;background:#f0f8fe"></div>
<div class="a" style="left:0px;top:649px;width:1257px;height:1px;background:#dcdcdc"></div>
<div class="t" style="left:3.0px;top:631.69px;font-size:11px">D.D.T. Ricevuto</div>
<div class="t" style="right:1151.0px;top:631.69px;font-size:11px">2022</div>
<div class="t" style="right:1009.7px;top:631.69px;font-size:11px">28</div>
<div class="t" style="right:929.0px;top:631.69px;font-size:11px">11010060</div>
<div class="t" style="left:465.0px;top:631.69px;font-size:11px">Google Store Italia</div>
<div class="t" style="left:705.0px;top:631.69px;font-size:11px">12/05/2022</div>
<div class="t" style="right:479.0px;top:631.69px;font-size:11px">574,12</div>
<div class="t" style="right:374.0px;top:631.69px;font-size:11px">2</div>
<div class="t" style="left:1020.0px;top:631.69px;font-size:11px">Fattura/Bolla di Acquisto</div>
<div class="a" style="left:0px;top:674px;width:1257px;height:1px;background:#dcdcdc"></div>
<div class="t" style="left:3.0px;top:656.69px;font-size:11px">D.D.T. Ricevuto</div>
<div class="t" style="right:1151.0px;top:656.69px;font-size:11px">2022</div>
<div class="t" style="right:1009.7px;top:656.69px;font-size:11px">29</div>
<div class="t" style="right:929.0px;top:656.69px;font-size:11px">11010060</div>
<div class="t" style="left:465.0px;top:656.69px;font-size:11px">Google Store Italia</div>
<div class="t" style="left:705.0px;top:656.69px;font-size:11px">12/05/2022</div>
<div class="t" style="right:479.0px;top:656.69px;font-size:11px">574,12</div>
<div class="t" style="right:374.0px;top:656.69px;font-size:11px">2</div>
<div class="t" style="left:1020.0px;top:656.69px;font-size:11px">Fattura/Bolla di Acquisto</div>
<div class="a" style="left:0px;top:675px;width:1257px;height:24px;background:#f0f8fe"></div>
<div class="a" style="left:0px;top:699px;width:1257px;height:1px;background:#dcdcdc"></div>
<div class="t" style="left:3.0px;top:681.69px;font-size:11px">D.D.T. Ricevuto</div>
<div class="t" style="right:1151.0px;top:681.69px;font-size:11px">2022</div>
<div class="t" style="right:1009.7px;top:681.69px;font-size:11px">30</div>
<div class="t" style="right:929.0px;top:681.69px;font-size:11px">11010060</div>
<div class="t" style="left:465.0px;top:681.69px;font-size:11px">Google Store Italia</div>
<div class="t" style="left:705.0px;top:681.69px;font-size:11px">12/05/2022</div>
<div class="t" style="right:479.0px;top:681.69px;font-size:11px">574,12</div>
<div class="t" style="right:374.0px;top:681.69px;font-size:11px">2</div>
<div class="t" style="left:1020.0px;top:681.69px;font-size:11px">Fattura/Bolla di Acquisto</div>
<div class="a" style="left:0px;top:0px;width:179px;height:24px;border:1px dotted #000"></div>
</div>
<div class="a" style="left:1389px;top:93px;width:17px;height:688px;background:#efefef"></div>
<svg style="left:1393px;top:98px" width="10" height="6" viewBox="0 0 10 6"><path d="M0 6H10L5 0Z" fill="#7d7d7d"/></svg>
<div class="a" style="left:1393px;top:111px;width:9px;height:358px;background:#848484"></div>
<svg style="left:1393px;top:770px" width="10" height="6" viewBox="0 0 10 6"><path d="M0 0H10L5 6Z" fill="#7d7d7d"/></svg>
<div class="a" style="left:2px;top:781px;width:1387px;height:16px;background:#efefef"></div>
<div class="a" style="left:2px;top:781px;width:55px;height:16px;background:#fff"></div>
<div class="a" style="left:57px;top:781px;width:14px;height:16px;background:#eef5fb"></div>
<div class="a" style="left:1389px;top:781px;width:17px;height:16px;background:#fff"></div>
<svg style="left:4px;top:785px" width="10" height="8" viewBox="0 0 10 8"><path d="M0.5 0V8" stroke="#9aa0a8" stroke-width="1.2"/><path d="M5.5 0V8L1.2 4Z M10 0V8L5.7 4Z" fill="#9aa0a8"/></svg>
<div class="t" style="left:25.5px;top:784.69px;font-size:11px;color:#000;">1/48</div>
<svg style="left:59px;top:785px" width="10" height="8" viewBox="0 0 10 8"><path d="M9.5 0V8" stroke="#4f6a8c" stroke-width="1.2"/><path d="M0 0V8L4.3 4Z M4.5 0V8L8.8 4Z" fill="#4f6a8c"/></svg>
<svg style="left:77px;top:785px" width="5" height="9" viewBox="0 0 5 9"><path d="M5 0V9L0 4.5Z" fill="#c3cad2"/></svg>
<svg style="left:1378px;top:785px" width="5" height="9" viewBox="0 0 5 9"><path d="M0 0V9L5 4.5Z" fill="#c3cad2"/></svg>
<div class="a" style="left:0px;top:797px;width:1407px;height:1px;background:#8fa3b8"></div>
</div>
</body></html>
